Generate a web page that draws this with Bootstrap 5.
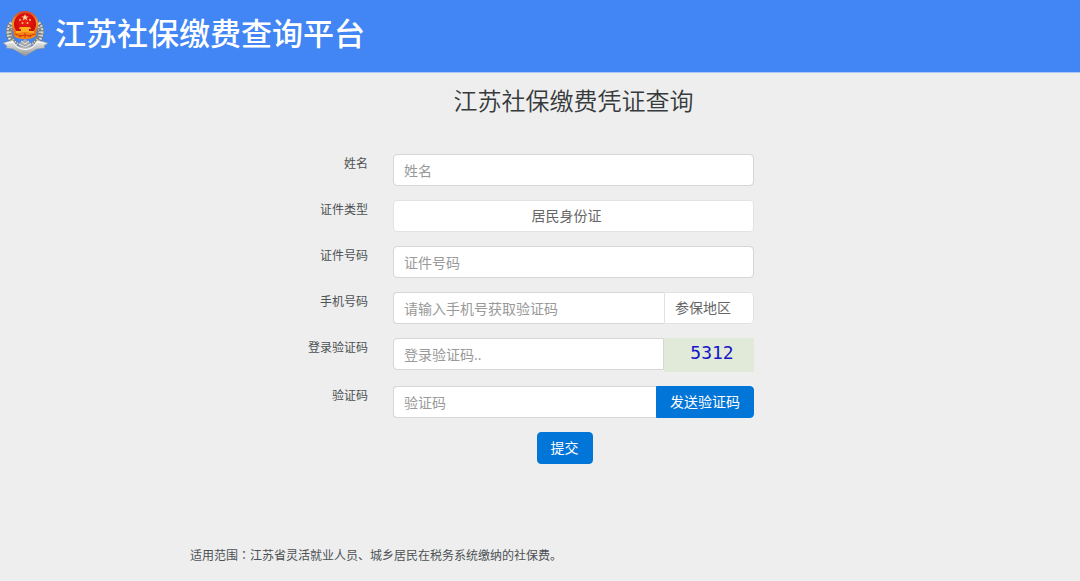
<!DOCTYPE html>
<html lang="zh-CN">
<head>
<meta charset="utf-8">
<meta name="viewport" content="width=device-width, initial-scale=1">
<title>江苏社保缴费查询平台</title>
<link href="https://cdn.jsdelivr.net/npm/bootstrap@5.3.0/dist/css/bootstrap.min.css" rel="stylesheet">
<style>
  body {
    background: #eee;
    color: #4c5154;
    font-family: "Open Sans", "Noto Sans CJK SC", sans-serif;
    font-size: 12px;
    line-height: 20px;
  }
  .site-header { background: #4285f5; height: 73px; padding: 0 4px 6px 3px; gap: 7px; border-bottom: 1px solid #a9c6f5; }
  .site-name { font-size: 31px; line-height: 40px; }
  .query-page { max-width: 724px; }
  .query-form { padding-top: 10px; }
  .form-line { display: grid; grid-template-columns: 178px minmax(0, 361px); column-gap: 25px; margin-bottom: 14px; }
  .page-title { font-size: 24px; line-height: 36px; font-weight: 350; color: #373a3c; margin-bottom: 35px; }
  .form-control, .form-select, .btn { font-size: 14px; line-height: 20px; height: 32px; border-radius: 4px; }
  .form-control { padding: 5px 10px; border-color: #d6d6d6; }
  .form-control::placeholder { color: #999; }
  .form-select { background-image: none; color: #666; border-color: #e2e2e2; padding: 5px 24px 5px 10px; }
  .id-type { text-align-last: center; }
  .area-select { flex: 0 0 90px; width: 90px; }
  .captcha {
    flex: 0 0 90px; height: 34px; padding: 0 0 4px 6px;
    background: #e1ead8; color: #1414c8;
    font: 18px/30px "DejaVu Sans Mono", monospace;
  }
  .btn-query { background: #0275d8; border-color: #0275d8; color: #fff; padding: 5px 13px; }
  .btn-query:hover { background: #025aa5; color: #fff; }
  .submit-line { padding-right: 18px; }
  .scope-note { margin-top: 81px; }
  .wide-colon { font-family: "Noto Sans CJK TC", sans-serif; }
</style>
</head>
<body>
<header class="site-header d-flex align-items-center">
  <svg width="45" height="46" viewBox="0 0 45 46" aria-hidden="true">
    <defs>
      <radialGradient id="disc" cx=".5" cy=".4" r=".6">
        <stop offset="0" stop-color="#f01c14"/><stop offset="1" stop-color="#c80a0a"/>
      </radialGradient>
      <linearGradient id="gold" x2="0" y2="1">
        <stop offset="0" stop-color="#d8422c"/><stop offset=".4" stop-color="#ef9a22"/><stop offset="1" stop-color="#e4560e"/>
      </linearGradient>
      <linearGradient id="silver" x2="0" y2="1">
        <stop offset="0" stop-color="#f4f4f2"/><stop offset="1" stop-color="#929494"/>
      </linearGradient>
    </defs>
    <path d="M9 13C4 19 5 30 14 35M35 13c5 6 4 17-5 22" fill="none" stroke="#6f7478" stroke-width="6"/>
    <path d="M9 13C4 19 5 30 14 35M35 13c5 6 4 17-5 22" fill="none" stroke="#d4d4cf" stroke-width="5" stroke-dasharray="2 1"/>
    <path d="M8 15C6 20 6 28 14 33M36 15c2 5 2 13-6 18" fill="none" stroke="#74787b" stroke-width="2" stroke-dasharray="2 2"/>
    <path d="M15 34l7-5 7 5-3 5h-8z" fill="#a5a7a8"/>
    <path d="M16 34l6 3 6-3M18 31l4 3 4-3" fill="none" stroke="#e8e8e8"/>
    <path d="M0 33l10-3 3 5c5 3 13 3 18 0l3-5 11 3-4 3 1 2-8 1-12 7-12-7-7-1 1-2z" fill="url(#silver)" stroke="#898e94" stroke-width=".5"/>
    <path d="M3 33l7-1 4 5q8 5 16 0l4-5 7 1" fill="none" stroke="#fff"/>
    <path d="M22 1C13 1 8 8 9 16l2 10c6 3 16 3 22 0l2-10C36 8 31 1 22 1z" fill="url(#gold)"/>
    <circle cx="22" cy="14" r="11" fill="url(#disc)"/>
    <path d="M22 4l1 2.500h2.500l-2 1.500 1 2.500-2.500-1.500-2.500 1.500 1-2.500-2-1.500H21z" fill="#ffd89a"/>
    <g fill="#ffc067"><circle cx="17" cy="10" r="1"/><circle cx="27" cy="10" r="1"/><circle cx="19.500" cy="13" r="1"/><circle cx="24.500" cy="13" r="1"/></g>
    <path d="M17 17h10l1 2h-2v2h5v2H13v-2h5v-2h-2z" fill="#ffae20"/>
    <path d="M11 22c3 2 6 1 8 0h6c2 1 5 2 8 0l-1 5c-6 3-14 3-20 0z" fill="#f58613"/>
    <path d="M12 24l6 2 4-1 4 1 6-2M22 23v5M16 27l3-2M28 27l-3-2" fill="none" stroke="#cf350b"/>
  </svg>
  <div class="site-name text-white fw-medium">江苏社保缴费查询平台</div>
</header>

<main class="container query-page">
  <form class="query-form">
    <div class="form-line mb-0">
      <span></span>
      <h1 class="page-title text-center">江苏社保缴费凭证查询</h1>
    </div>
    <div class="form-line">
      <label class="text-end" for="name">姓名</label>
      <input class="form-control" id="name" type="text" placeholder="姓名">
    </div>
    <div class="form-line">
      <label class="text-end" for="idType">证件类型</label>
      <select class="form-select id-type" id="idType"><option>居民身份证</option></select>
    </div>
    <div class="form-line">
      <label class="text-end" for="idNumber">证件号码</label>
      <input class="form-control" id="idNumber" type="text" placeholder="证件号码">
    </div>
    <div class="form-line">
      <label class="text-end" for="phone">手机号码</label>
      <div class="d-flex">
        <input class="form-control rounded-end-0 border-end-0" id="phone" type="tel" placeholder="请输入手机号获取验证码">
        <select class="form-select area-select rounded-start-0 pe-0" aria-label="参保地区"><option>参保地区</option></select>
      </div>
    </div>
    <div class="form-line">
      <label class="text-end" for="loginCode">登录验证码</label>
      <div class="d-flex">
        <input class="form-control rounded-end-0" id="loginCode" type="text" placeholder="登录验证码..">
        <button class="captcha border-0 text-center" type="button">5312</button>
      </div>
    </div>
    <div class="form-line">
      <label class="text-end" for="smsCode">验证码</label>
      <div class="d-flex">
        <input class="form-control rounded-end-0 border-end-0" id="smsCode" type="text" placeholder="验证码">
        <button class="btn btn-query rounded-start-0 flex-shrink-0" type="button">发送验证码</button>
      </div>
    </div>
    <div class="form-line mb-0">
      <span></span>
      <div class="submit-line text-center"><button class="btn btn-query" type="submit">提交</button></div>
    </div>
  </form>
  <p class="scope-note mb-0">适用范围<span class="wide-colon" lang="zh-TW">：</span>江苏省灵活就业人员、城乡居民在税务系统缴纳的社保费。</p>
</main>
<script src="https://cdn.jsdelivr.net/npm/bootstrap@5.3.0/dist/js/bootstrap.bundle.min.js"></script>
</body>
</html>
